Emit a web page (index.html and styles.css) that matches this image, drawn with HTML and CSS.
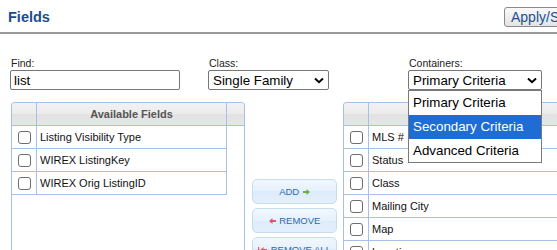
FILE: index.html
```html
<!DOCTYPE html>
<html>
<head>
  <meta charset="utf-8">
  <link rel="stylesheet" href="styles.css">
</head>
<body>
  <div class="topbar">
    <h1 class="title">Fields</h1>
    <button class="apply-btn">Apply/Save</button>
  </div>

  <!-- Filters -->
  <div class="filters">
    <div class="filter">
      <label>Find:</label>
      <input type="text" class="text-input" value="list">
    </div>
    <div class="filter">
      <label>Class:</label>
      <div class="select select-class">
        <span>Single Family</span>
        <svg class="chevron" width="10" height="7" viewBox="0 0 10 7"><path d="M1 1.5 L5 5.2 L9 1.5" fill="none" stroke="#000" stroke-width="2"/></svg>
      </div>
    </div>
    <div class="filter filter-containers">
      <label>Containers:</label>
      <div class="select select-containers">
        <span>Primary Criteria</span>
        <svg class="chevron" width="10" height="7" viewBox="0 0 10 7"><path d="M1 1.5 L5 5.2 L9 1.5" fill="none" stroke="#000" stroke-width="2"/></svg>
      </div>
      <ul class="options">
        <li>Primary Criteria</li>
        <li class="selected">Secondary Criteria</li>
        <li>Advanced Criteria</li>
      </ul>
    </div>
  </div>

  <!-- Field lists -->
  <div class="lists">
    <div class="panel">
      <div class="head">
        <div class="c-check"></div>
        <div class="c-name">Available Fields</div>
        <div class="c-extra"></div>
      </div>
      <div class="row"><div class="c-check"><span class="box"></span></div><div class="c-name">Listing Visibility Type</div></div>
      <div class="row"><div class="c-check"><span class="box"></span></div><div class="c-name">WIREX ListingKey</div></div>
      <div class="row"><div class="c-check"><span class="box"></span></div><div class="c-name">WIREX Orig ListingID</div></div>
    </div>

    <div class="actions">
      <button class="move-btn">ADD <svg class="arrow-after" width="7" height="6" viewBox="0 0 7 6"><path d="M0 2h3.5V0L7 3 3.5 6V4H0z" fill="#6cb043"/></svg></button>
      <button class="move-btn"><svg class="arrow-before" width="7" height="6" viewBox="0 0 7 6"><path d="M7 2H3.5V0L0 3l3.5 3V4H7z" fill="#e0566e"/></svg> REMOVE</button>
      <button class="move-btn"><svg class="arrow-before" width="9" height="6" viewBox="0 0 9 6"><path d="M0 0h1.2v6H0z M9 2H5.5V0L2 3l3.5 3V4H9z" fill="#e0566e"/></svg> REMOVE ALL</button>
    </div>

    <div class="panel">
      <div class="head">
        <div class="c-check"></div>
        <div class="c-name">Selected Fields</div>
        <div class="c-extra"></div>
      </div>
      <div class="row"><div class="c-check"><span class="box"></span></div><div class="c-name">MLS #</div></div>
      <div class="row"><div class="c-check"><span class="box"></span></div><div class="c-name">Status</div></div>
      <div class="row"><div class="c-check"><span class="box"></span></div><div class="c-name">Class</div></div>
      <div class="row"><div class="c-check"><span class="box"></span></div><div class="c-name">Mailing City</div></div>
      <div class="row"><div class="c-check"><span class="box"></span></div><div class="c-name">Map</div></div>
      <div class="row"><div class="c-check"><span class="box"></span></div><div class="c-name">Location</div></div>
    </div>
  </div>
</body>
</html>
```

FILE: styles.css
```css
body {
  margin: 0;
  overflow: hidden;
  font-family: 'Liberation Sans', Arial, sans-serif;
  color: #111;
  background: #fff;
}

.topbar {
  display: flex;
  align-items: center;
  padding: 7px 0 5px 8px;
  border-bottom: 2px solid #9a9a9a;
}

.title {
  flex: 0 0 496px;
  margin: 0;
  font-size: 14.5px;
  font-weight: bold;
  color: #1b4d8e;
}

.apply-btn {
  flex-shrink: 0;
  height: 20px;
  padding: 0 6px;
  border: 1px solid #8a8a8a;
  border-radius: 3px;
  background: linear-gradient(#fafafa, #e4e4e4);
  font-family: 'Liberation Sans', Arial, sans-serif;
  font-size: 14px;
  color: #1e4f8f;
}

.filters {
  display: grid;
  grid-template-columns: 198px 200px 140px;
  margin-top: 23px;
  padding-left: 10px;
}

.filter {
  position: relative;
}

.filter label {
  display: block;
  height: 13px;
  padding-left: 1px;
  font-size: 10.5px;
  line-height: 13px;
  color: #222;
}

.text-input {
  box-sizing: border-box;
  width: 170px;
  height: 20px;
  margin: 0;
  padding: 0 3px;
  border: 1px solid #767676;
  border-radius: 2px;
  font-family: 'Liberation Sans', Arial, sans-serif;
  font-size: 13.33px;
  color: #000;
}

.select {
  box-sizing: border-box;
  display: flex;
  align-items: center;
  justify-content: space-between;
  height: 20px;
  padding: 0 4px 0 4px;
  border: 1px solid #767676;
  border-radius: 2px;
  font-size: 13.33px;
  color: #000;
}

.select-class {
  width: 121px;
}

.select-containers {
  width: 134px;
}

.options {
  position: absolute;
  top: 33px;
  left: 0;
  width: 134px;
  box-sizing: border-box;
  margin: 0;
  padding: 0;
  list-style: none;
  background: #fff;
  border: 1px solid #7a7a7a;
  font-size: 13.33px;
  z-index: 5;
}

.options li {
  height: 24px;
  line-height: 24px;
  padding-left: 4px;
  color: #000;
}

.options li:last-child {
  height: 23px;
}

.options li.selected {
  background: #1f6cd5;
  color: #fff;
}

.lists {
  display: flex;
  align-items: flex-start;
  margin-top: 12px;
  padding-left: 11px;
}

.panel {
  flex-shrink: 0;
  width: 234px;
  height: 170px;
  box-sizing: border-box;
  border: 1px solid #a6c1e7;
  border-bottom: none;
  border-radius: 4px 4px 0 0;
}

.head {
  display: flex;
  height: 23px;
  box-sizing: border-box;
  border-bottom: 1px solid #a6c1e7;
  border-radius: 3px 3px 0 0;
  background: linear-gradient(#f1f1f1, #ececec 50%, #e2e2e2 50%, #e6e6e6);
}

.head .c-name {
  text-align: center;
  font-size: 11px;
  font-weight: bold;
  line-height: 22px;
  color: #555;
}

.c-check {
  flex: 0 0 25px;
  box-sizing: border-box;
  display: flex;
  align-items: center;
  justify-content: center;
  border-right: 1px solid #a6c1e7;
}

.c-name {
  flex: 0 0 190px;
  box-sizing: border-box;
  border-right: 1px solid #a6c1e7;
}

.c-extra {
  flex: 1;
}

.row {
  display: flex;
  width: 215px;
  height: 23px;
  box-sizing: border-box;
  border-bottom: 1px solid #a6c1e7;
}

.row .c-name {
  padding-left: 3px;
  font-size: 11px;
  line-height: 22px;
  color: #111;
}

.box {
  width: 13px;
  height: 13px;
  box-sizing: border-box;
  border: 1px solid #6d6d6d;
  border-radius: 3px;
  background: #fff;
}

.actions {
  flex-shrink: 0;
  display: flex;
  flex-direction: column;
  gap: 4px;
  width: 85px;
  margin: 0 6px 0 7px;
  padding-top: 77px;
}

.move-btn {
  height: 25px;
  padding: 0;
  border: 1px solid #c6dcf1;
  border-radius: 5px;
  background: linear-gradient(#f1f7fe, #e6f1fc 50%, #ddebfa 50%, #e4effb);
  font-family: 'Liberation Sans', Arial, sans-serif;
  font-size: 9.5px;
  color: #2d6bae;
}

.move-btn svg {
  vertical-align: 0;
}

.arrow-after {
  margin-left: 1px;
}

.arrow-before {
  margin-right: 1px;
}
```
